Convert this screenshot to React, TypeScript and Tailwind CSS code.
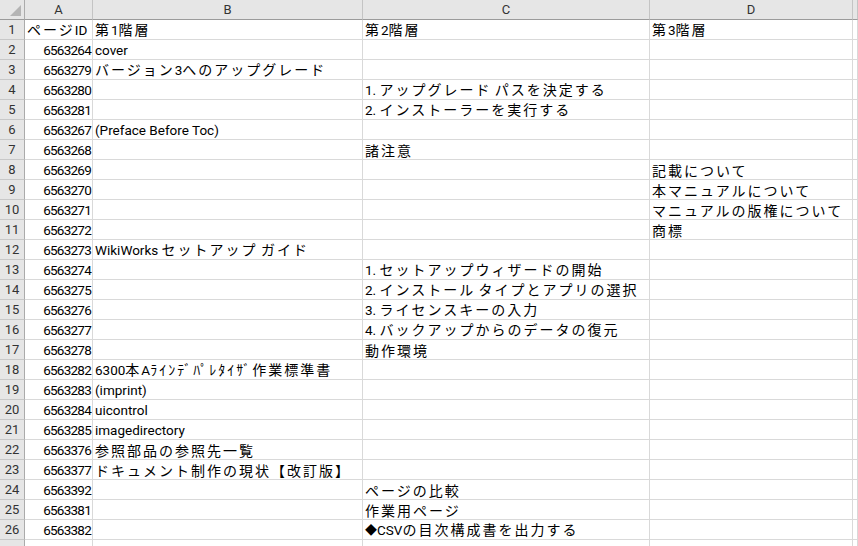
import React from "react";

const rows: string[][] = [
  ["ページID", "第1階層", "第2階層", "第3階層"],
  ["6563264", "cover", "", ""],
  ["6563279", "バージョン3へのアップグレード", "", ""],
  ["6563280", "", "1. アップグレード パスを決定する", ""],
  ["6563281", "", "2. インストーラーを実行する", ""],
  ["6563267", "(Preface Before Toc)", "", ""],
  ["6563268", "", "諸注意", ""],
  ["6563269", "", "", "記載について"],
  ["6563270", "", "", "本マニュアルについて"],
  ["6563271", "", "", "マニュアルの版権について"],
  ["6563272", "", "", "商標"],
  ["6563273", "WikiWorks セットアップ ガイド", "", ""],
  ["6563274", "", "1. セットアップウィザードの開始", ""],
  ["6563275", "", "2. インストール タイプとアプリの選択", ""],
  ["6563276", "", "3. ライセンスキーの入力", ""],
  ["6563277", "", "4. バックアップからのデータの復元", ""],
  ["6563278", "", "動作環境", ""],
  ["6563282", "6300本Aﾗｲﾝﾃﾞﾊﾟﾚﾀｲｻﾞ作業標準書", "", ""],
  ["6563283", "(imprint)", "", ""],
  ["6563284", "uicontrol", "", ""],
  ["6563285", "imagedirectory", "", ""],
  ["6563376", "参照部品の参照先一覧", "", ""],
  ["6563377", "ドキュメント制作の現状【改訂版】", "", ""],
  ["6563392", "", "ページの比較", ""],
  ["6563381", "", "作業用ページ", ""],
  ["6563382", "", "◆CSVの目次構成書を出力する", ""],
  ["", "", "", ""],
];

function Rich({ t }: { t: string }) {
  const parts = t.split(/([\x00-\x7F]+|◆)/).filter((p) => p.length > 0);
  return (
    <span className="block whitespace-pre leading-[16px]">
      {parts.map((p, i) =>
        p === "◆" ? (
          <span key={i} className="font-['Noto_Sans_CJK_JP',sans-serif] text-[12px] leading-[16px]">
            {p}
          </span>
        ) : /^[\x00-\x7F]+$/.test(p) ? (
          <span key={i} className="font-['Roboto',sans-serif] text-[13.5px] leading-[16px]">
            {p}
          </span>
        ) : (
          <span
            key={i}
            className="font-['Noto_Sans_CJK_JP',sans-serif] text-[14px] leading-[16px] tracking-[2px]"
          >
            {p}
          </span>
        )
      )}
    </span>
  );
}

const cell =
  "h-[20px] border-r border-b border-[#d9d9d9] overflow-hidden whitespace-nowrap flex items-center text-black";

export default function App() {
  return (
    <div className="w-[858px] h-[546px] overflow-hidden bg-white select-none">
      <div className="grid grid-cols-[25px_68px_270px_287px_203px_1fr]">
        {/* header row */}
        <div className="relative h-[20px] bg-[#e6e6e6] border-r border-r-[#ababab] border-b border-b-[#9b9b9b]">
          <div className="absolute right-[3px] bottom-[3px] w-0 h-0 border-l-[11px] border-l-transparent border-b-[11px] border-b-[#b4b4b4]" />
        </div>
        {["A", "B", "C", "D", ""].map((c, i) => (
          <div
            key={i}
            className="h-[20px] bg-[#e6e6e6] border-r border-r-[#c4c4c4] border-b border-b-[#9b9b9b] flex items-center justify-center font-['Roboto',sans-serif] text-[13px] leading-[16px] text-[#333]"
          >
            {c}
          </div>
        ))}
        {rows.map((r, ri) => (
          <React.Fragment key={ri}>
            <div className="h-[20px] bg-[#e6e6e6] border-r border-r-[#ababab] border-b border-b-[#c8c8c8] flex items-center justify-center font-['Roboto',sans-serif] text-[13px] leading-[16px] text-[#333]">
              {ri < 26 ? ri + 1 : ""}
            </div>
            {r.map((v, ci) => {
              const isNum = ci === 0 && /^\d+$/.test(v);
              if (isNum) {
                return (
                  <div key={ci} className={cell + " justify-end pr-[1px]"}>
                    <span className="font-['Roboto',sans-serif] text-[13.5px] leading-[16px] tracking-[-0.75px]">
                      {v}
                    </span>
                  </div>
                );
              }
              return (
                <div key={ci} className={cell + " justify-start pl-[2px]"}>
                  <Rich t={v} />
                </div>
              );
            })}
            <div className={cell} />
          </React.Fragment>
        ))}
      </div>
    </div>
  );
}
